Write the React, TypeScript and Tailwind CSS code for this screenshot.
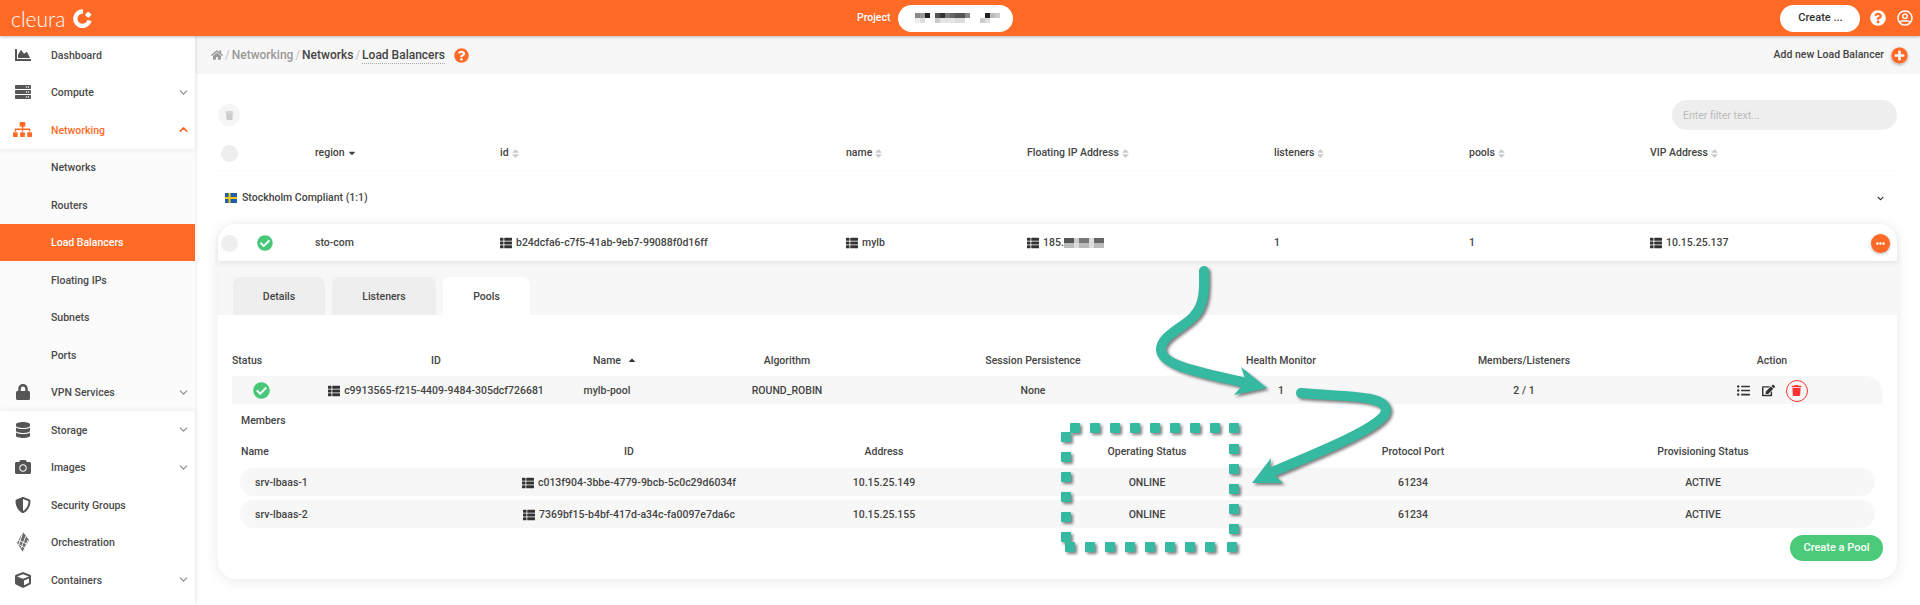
import React from "react";
import { ChevronDown, ChevronUp } from "lucide-react";
import {
  FaChartArea, FaServer, FaSitemap, FaLock, FaDatabase, FaCamera, FaShieldAlt, FaCube, FaHome,
  FaQuestionCircle, FaRegUserCircle, FaPlusCircle, FaTrash, FaCheckCircle, FaThList, FaListUl,
  FaEdit, FaSort, FaCaretDown, FaCaretUp, FaEllipsisH, FaChevronDown,
} from "react-icons/fa";

const Orchestration = () => (
  <svg width="14" height="22" viewBox="0 0 14 22" className="text-[#444]">
    <path d="M7 1 L13 9 L7 21 L1 12 Z" fill="currentColor" opacity="0.8" />
    <path d="M7 1 L3 13 M10 5 L5 17 M12 9 L7 21 M2 9 L11 13 M2 13 L9 17" stroke="#fff" strokeWidth="0.9" fill="none" />
  </svg>
);

const Logo = () => (
  <svg width="19" height="19" viewBox="0 0 20 20">
    <path d="M10.5 2.6 A7.6 7.6 0 1 0 17.4 12" fill="none" stroke="#fff" strokeWidth="4.6" />
    <rect x="13.6" y="3.5" width="5" height="5" fill="#fff" transform="rotate(40 16 6)" />
  </svg>
);

type NavItem = { label: string; icon?: React.ReactNode; chev?: "down" | "up"; state?: "open" | "sub" | "active" };
const I = "text-[16px]";
const top: NavItem[] = [
  { label: "Dashboard", icon: <FaChartArea className={I} />, },
  { label: "Compute", icon: <FaServer className={I} />, chev: "down" },
  { label: "Networking", icon: <FaSitemap className="text-[19px]" />, chev: "up", state: "open" },
];
const sub: NavItem[] = [
  { label: "Networks", state: "sub" },
  { label: "Routers", state: "sub" },
  { label: "Load Balancers", state: "active" },
  { label: "Floating IPs", state: "sub" },
  { label: "Subnets", state: "sub" },
  { label: "Ports", state: "sub" },
  { label: "VPN Services", icon: <FaLock className={I} />, chev: "down", state: "sub" },
];
const bottom: NavItem[] = [
  { label: "Storage", icon: <FaDatabase className={I} />, chev: "down" },
  { label: "Images", icon: <FaCamera className={I} />, chev: "down" },
  { label: "Security Groups", icon: <FaShieldAlt className={I} /> },
  { label: "Orchestration", icon: <Orchestration /> },
  { label: "Containers", icon: <FaCube className={I} />, chev: "down" },
];

const NavRow = ({ item }: { item: NavItem }) => {
  const active = item.state === "active";
  const open = item.state === "open";
  return (
    <div
      className={`flex h-[37.5px] items-center text-[10.5px] font-medium ${
        active ? "bg-[#ff6b27] text-white" : open ? "text-[#ff6b27]" : "text-[#4a4a4a]"
      }`}
    >
      <span className={`flex w-[45px] shrink-0 justify-center ${open ? "text-[#ff6b27]" : "text-[#555]"}`}>{item.icon}</span>
      <span className="ml-[6px] pt-[2px]">{item.label}</span>
      {item.chev === "down" && <ChevronDown size={13} className="ml-auto mr-[5px] text-[#888]" />}
      {item.chev === "up" && <ChevronUp size={13} strokeWidth={3} className="ml-auto mr-[5px] text-[#ff6b27]" />}
    </div>
  );
};

const Mosaic = ({ w, h, cells }: { w: number; h: number; cells: [number, number, string][] }) => (
  <svg width={w} height={h} viewBox={`0 0 ${w} ${h}`} className="block">
    {cells.map(([x, y, c], i) => (
      <rect key={i} x={x} y={y} width="5" height="5" fill={c} />
    ))}
  </svg>
);

const projectCells: [number, number, string][] = [
  [0, 0, "#888"], [5, 0, "#999"], [10, 0, "#222"], [0, 5, "#eee"], [5, 5, "#ddd"],
  [20, 0, "#555"], [25, 0, "#333"], [30, 0, "#777"], [35, 0, "#666"], [40, 0, "#555"], [45, 0, "#555"], [50, 0, "#888"],
  [20, 5, "#ccc"], [25, 5, "#e5e5e5"], [30, 5, "#e5e5e5"], [35, 5, "#e5e5e5"], [40, 5, "#ddd"], [45, 5, "#ddd"],
  [65, 5, "#ccc"], [70, 0, "#222"], [70, 5, "#ddd"], [75, 0, "#bbb"], [80, 0, "#ccc"],
];
const ipCells: [number, number, string][] = [
  [0, 0, "#555"], [5, 0, "#555"], [10, 0, "#ccc"], [15, 0, "#777"], [20, 0, "#777"], [25, 0, "#ddd"], [30, 0, "#666"], [35, 0, "#666"],
  [0, 5, "#bbb"], [5, 5, "#bbb"], [10, 5, "#ddd"], [15, 5, "#bbb"], [20, 5, "#bbb"], [25, 5, "#ddd"], [30, 5, "#bbb"], [35, 5, "#bbb"],
];

const Sorted = ({ label, sort = true }: { label: string; sort?: boolean }) => (
  <span className="flex items-center gap-[1px]">
    {label}
    {sort ? <FaSort className="text-[11px] text-[#ccc]" /> : <FaCaretDown className="ml-[1px] text-[10px] text-[#444]" />}
  </span>
);

const IdCell = ({ children }: { children: React.ReactNode }) => (
  <span className="flex items-center gap-[4px] whitespace-nowrap">
    <FaThList className="text-[12px] text-[#333]" />
    {children}
  </span>
);

const topCols = "grid-cols-[97px_185px_346px_181px_247px_195px_181px_1fr]";
const poolCols = "grid-cols-[58px_292px_50px_310px_182px_314px_172px_272px]";
const memberCols = "grid-cols-[280px_218px_292px_234px_298px_282px_31px]";

const Center = ({ children, className = "" }: { children?: React.ReactNode; className?: string }) => (
  <div className={`flex items-center justify-center whitespace-nowrap ${className}`}>{children}</div>
);

const MemberRow = ({ name, id, ip }: { name: string; id: string; ip: string }) => (
  <div className={`grid h-[28px] ${memberCols} items-center rounded-full bg-[#f7f7f7] pt-[1px] text-[#444]`}>
    <div className="pl-[15px]">{name}</div>
    <Center><IdCell>{id}</IdCell></Center>
    <Center>{ip}</Center>
    <Center>ONLINE</Center>
    <Center>61234</Center>
    <Center>ACTIVE</Center>
  </div>
);

const Annotations = () => {
  const top = [1075, 1095, 1115, 1135, 1155, 1175, 1195, 1215, 1234];
  const bottom = [1070, 1090, 1110, 1130, 1150, 1170, 1190, 1210, 1232];
  const left = [437, 457, 477, 497, 517, 537];
  const right = [449, 469, 489, 509, 529];
  return (
    <svg width="1920" height="605" viewBox="0 0 1920 605" className="pointer-events-none absolute left-0 top-0 drop-shadow-[2px_2px_1.5px_rgba(0,0,0,0.5)]">
      <g fill="#35b9a0">
        {top.map((x) => <rect key={x} x={x - 5} y={423} width="10" height="10" rx="1" />)}
        {bottom.map((x) => <rect key={x} x={x - 5} y={542} width="10" height="10" rx="1" />)}
        {left.map((y) => <rect key={y} x={1061} y={y - 5} width="10" height="10" rx="1" />)}
        {right.map((y) => <rect key={y} x={1229} y={y - 5} width="10" height="10" rx="1" />)}
        <path d="M1267 388 L1241 367 L1246 381 L1234 395 Z" />
        <path d="M1252 483 L1271 458 L1270 471 L1283 483 Z" />
      </g>
      <g fill="none" stroke="#35b9a0" strokeLinecap="round" strokeLinejoin="round">
        <path strokeWidth="10" d="M1204 271 C1204 285 1206 303 1194 316 C1186 326 1160 336 1161 350 C1162 366 1200 372 1250 384" />
        <path strokeWidth="10" d="M1301 393 C1340 397 1385 394 1386 410 C1387 424 1330 448 1272 472" />
      </g>
    </svg>
  );
};

export default function App() {
  return (
    <div className="relative h-[605px] w-[1920px] overflow-hidden bg-white font-['Roboto',sans-serif] text-[10.5px] font-medium text-[#444]">
      <header className="relative z-10 flex h-[36px] items-center bg-[#ff6b27] pl-[11px] text-white shadow-[0_1px_3px_rgba(0,0,0,0.25)]">
        <div className="flex w-[846px] shrink-0 items-center gap-[8px]">
          <span className="font-['Lato',sans-serif] text-[21px] font-light leading-none">cleura</span>
          <Logo />
        </div>
        <span>Project</span>
        <div className="ml-[8px] flex h-[27px] w-[115px] items-center rounded-full bg-white pl-[17px]">
          <Mosaic w={85} h={10} cells={projectCells} />
        </div>
        <button className="ml-[767px] h-[27px] w-[80px] rounded-full bg-white text-[11px] text-[#333]">Create ...</button>
        <FaQuestionCircle className="ml-[10px] text-[16px]" />
        <FaRegUserCircle className="ml-[11px] text-[16px]" />
      </header>

      <div className="flex h-[569px]">
        <aside className="relative w-[195px] shrink-0 bg-white shadow-[1px_0_4px_rgba(0,0,0,0.08)]">
          <div className="relative z-[1] bg-white shadow-[0_2px_5px_rgba(0,0,0,0.06)]">
            {top.map((n) => <NavRow key={n.label} item={n} />)}
          </div>
          <div className="bg-[#fbfbfb]">
            {sub.map((n) => <NavRow key={n.label} item={n} />)}
          </div>
          <div className="relative z-[1] bg-white shadow-[0_-2px_5px_rgba(0,0,0,0.05)]">
            {bottom.map((n) => <NavRow key={n.label} item={n} />)}
          </div>
        </aside>

        <main className="min-w-0 flex-1">
          <div className="flex h-[38px] items-center justify-between bg-[#f7f7f7] pl-[16px] pr-[12px]">
            <div className="flex items-center text-[12px]">
              <FaHome className="text-[12px] text-[#999]" />
              <span className="mx-[2px] text-[#ccc]">/</span>
              <span className="text-[#999]">Networking</span>
              <span className="mx-[2px] text-[#ccc]">/</span>
              <span className="text-[#444]">Networks</span>
              <span className="mx-[2px] text-[#ccc]">/</span>
              <span className="border-b border-dotted border-[#aaa] leading-[16px] text-[#444]">Load Balancers</span>
              <FaQuestionCircle className="ml-[9px] text-[15px] text-[#ff6b27]" />
            </div>
            <div className="flex items-center gap-[7px]">
              <span>Add new Load Balancer</span>
              <FaPlusCircle className="rounded-full text-[17px] text-[#ff6b27] shadow-[0_1px_3px_rgba(0,0,0,0.3)]" />
            </div>
          </div>

          <div className="px-[23px] pt-[26px]">
            <div className="flex h-[30px] items-center justify-between">
              <span className="flex h-[22px] w-[22px] items-center justify-center rounded-full bg-[#f5f5f5]">
                <FaTrash className="text-[9px] text-[#ccc]" />
              </span>
              <input
                placeholder="Enter filter text..."
                className="h-[30px] w-[225px] rounded-full bg-[#eeeeee] pl-[11px] text-[10.5px] font-normal outline-none placeholder:text-[#bbb]"
              />
            </div>

            <div className={`grid h-[41px] ${topCols} items-center border-b border-[#fafafa] pt-[6px]`}>
              <span className="ml-[3px] h-[17px] w-[17px] rounded-full bg-[#eeeeee]" />
              <Sorted label="region" sort={false} />
              <Sorted label="id" />
              <Sorted label="name" />
              <Sorted label="Floating IP Address" />
              <Sorted label="listeners" />
              <Sorted label="pools" />
              <Sorted label="VIP Address" />
            </div>

            <div className="flex h-[53px] items-center justify-between pl-[7px] pr-[13px] pt-[1px]">
              <span className="flex items-center gap-[5px]">
                <svg width="12" height="10" viewBox="0 0 12 10">
                  <rect width="12" height="10" fill="#1f5fa8" />
                  <rect x="3.5" width="2" height="10" fill="#f5c518" />
                  <rect y="4" width="12" height="2" fill="#f5c518" />
                </svg>
                Stockholm Compliant (1:1)
              </span>
              <FaChevronDown className="text-[7px] text-[#222]" />
            </div>

            <section className="h-[355px] rounded-[18px] bg-white shadow-[0_2px_14px_rgba(0,0,0,0.09)]">
              <div className={`relative grid h-[37px] ${topCols} items-center rounded-t-[18px] bg-white pt-[1px] shadow-[0_2px_5px_rgba(0,0,0,0.08)]`}>
                <div className="flex items-center">
                  <span className="ml-[3px] h-[17px] w-[17px] rounded-full bg-[#eeeeee]" />
                  <FaCheckCircle className="ml-[19px] text-[16px] text-[#46c878]" />
                </div>
                <span>sto-com</span>
                <IdCell>b24dcfa6-c7f5-41ab-9eb7-99088f0d16ff</IdCell>
                <IdCell>mylb</IdCell>
                <IdCell>
                  <span className="flex items-center">185.<Mosaic w={40} h={10} cells={ipCells} /></span>
                </IdCell>
                <span>1</span>
                <span>1</span>
                <div className="flex items-center justify-between pr-[7px]">
                  <IdCell>10.15.25.137</IdCell>
                  <span className="flex h-[19px] w-[19px] items-center justify-center rounded-full bg-[#ff6b27] shadow-[0_1px_3px_rgba(0,0,0,0.3)]">
                    <FaEllipsisH className="text-[9px] text-white" />
                  </span>
                </div>
              </div>

              <div className="flex h-[54px] items-end gap-[7px] bg-[#f7f7f7] pl-[15px] text-center">
                <div className="flex h-[38px] w-[92px] items-center justify-center rounded-t-lg bg-[#eeeeee] pt-[1px]">Details</div>
                <div className="flex h-[38px] w-[104px] items-center justify-center rounded-t-lg bg-[#eeeeee] pt-[1px]">Listeners</div>
                <div className="flex h-[38px] w-[87px] items-center justify-center rounded-t-lg bg-white pt-[1px]">Pools</div>
              </div>

              <div className="px-[14px] pt-[35px] font-medium">
                <div className={`grid h-[26px] ${poolCols} items-center pb-[4px]`}>
                  <div>Status</div>
                  <Center>ID</Center>
                  <Center className="relative">
                    Name
                    <FaCaretUp className="absolute left-[45px] top-[2px] text-[10px] text-[#333]" />
                  </Center>
                  <Center>Algorithm</Center>
                  <Center>Session Persistence</Center>
                  <Center>Health Monitor</Center>
                  <Center>Members/Listeners</Center>
                  <Center className="pl-[52px]">Action</Center>
                </div>
                <div className={`grid h-[28px] ${poolCols} items-center rounded-tr-[18px] bg-[#f7f7f7] pt-[1px]`}>
                  <Center><FaCheckCircle className="text-[17px] text-[#46c878]" /></Center>
                  <Center><IdCell>c9913565-f215-4409-9484-305dcf726681</IdCell></Center>
                  <Center>mylb-pool</Center>
                  <Center>ROUND_ROBIN</Center>
                  <Center>None</Center>
                  <Center>1</Center>
                  <Center>2 / 1</Center>
                  <Center className="pl-[52px]">
                    <FaListUl className="text-[13px] text-[#333]" />
                    <FaEdit className="ml-[12px] text-[13px] text-[#333]" />
                    <span className="ml-[11px] flex h-[22px] w-[22px] items-center justify-center rounded-full border border-[#f33]">
                      <FaTrash className="text-[11px] text-[#f33]" />
                    </span>
                  </Center>
                </div>

                <div className="flex h-[34px] items-center pl-[9px]">Members</div>
                <div className="px-[8px]">
                  <div className={`grid h-[30px] ${memberCols} items-center pb-[3px]`}>
                    <div className="pl-[1px]">Name</div>
                    <Center>ID</Center>
                    <Center>Address</Center>
                    <Center>Operating Status</Center>
                    <Center>Protocol Port</Center>
                    <Center>Provisioning Status</Center>
                  </div>
                  <div className="flex flex-col gap-[4px]">
                    <MemberRow name="srv-lbaas-1" id="c013f904-3bbe-4779-9bcb-5c0c29d6034f" ip="10.15.25.149" />
                    <MemberRow name="srv-lbaas-2" id="7369bf15-b4bf-417d-a34c-fa0097e7da6c" ip="10.15.25.155" />
                  </div>
                </div>
                <div className="mt-[7px] flex justify-end">
                  <button className="h-[26px] w-[93px] rounded-full bg-[#4bcb79] text-[11px] text-white">Create a Pool</button>
                </div>
              </div>
            </section>
          </div>
        </main>
      </div>
      <Annotations />
    </div>
  );
}
